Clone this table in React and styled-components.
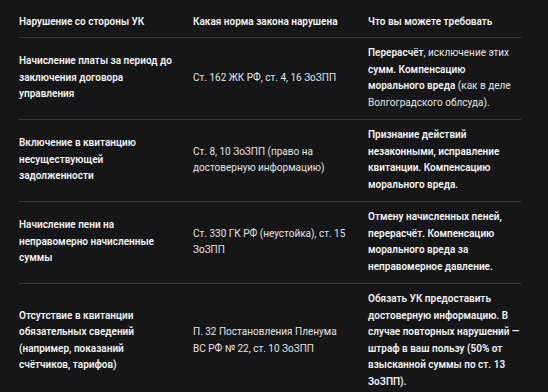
import React from 'react'
import styled, { createGlobalStyle } from 'styled-components'

const GlobalStyle = createGlobalStyle`
  html, body {
    margin: 0;
    padding: 0;
    background: #161618;
  }
  body {
    font-family: Roboto, "Noto Sans", sans-serif;
    color: #ececec;
  }
`

const Page = styled.div`
  padding: 0 19px;
  width: 548px;
  height: 392px;
  box-sizing: border-box;
  overflow: hidden;
`

const Table = styled.table`
  width: 502px;
  border-collapse: collapse;
  table-layout: fixed;
  font-size: 10px;
  line-height: 16.5px;
`

const HeadCell = styled.th`
  box-sizing: border-box;
  text-align: left;
  font-weight: 600;
  color: #f2f2f2;
  padding: 14px 20px 6px 0;
  border-bottom: 1px solid #3a3a3c;
  width: ${p => p.$w}px;
  &:last-child {
    padding-right: 0;
  }
`

const Row = styled.tr`
  border-bottom: 1px solid #3a3a3c;
  &:last-child {
    border-bottom: none;
  }
`

const Cell = styled.td`
  vertical-align: middle;
  padding: 7.5px 20px 7.5px 0;
  font-weight: ${p => (p.$bold ? 600 : 400)};
  color: ${p => (p.$bold ? '#f2f2f2' : '#e4e4e4')};
  &:last-child {
    padding-right: 0;
  }
`

const B = styled.b`
  font-weight: 600;
  color: #f2f2f2;
`

const rows = [
  {
    what: 'Начисление платы за период до заключения договора управления',
    law: 'Ст. 162 ЖК РФ, ст. 4, 16 ЗоЗПП',
    demand: (
      <>
        <B>Перерасчёт</B>, исключение этих <B>сумм. Компенсацию морального вреда</B> (как в деле Волгоградского облсуда).
      </>
    ),
    boldDemand: false,
  },
  {
    what: 'Включение в квитанцию несуществующей задолженности',
    law: 'Ст. 8, 10 ЗоЗПП (право на достоверную информацию)',
    demand: 'Признание действий незаконными, исправление квитанции. Компенсацию морального вреда.',
    boldDemand: true,
  },
  {
    what: 'Начисление пени на неправомерно начисленные суммы',
    law: 'Ст. 330 ГК РФ (неустойка), ст. 15 ЗоЗПП',
    demand: 'Отмену начисленных пеней, перерасчёт. Компенсацию морального вреда за неправомерное давление.',
    boldDemand: true,
  },
  {
    what: 'Отсутствие в квитанции обязательных сведений (например, показаний счётчиков, тарифов)',
    law: 'П. 32 Постановления Пленума ВС РФ № 22, ст. 10 ЗоЗПП',
    demand: 'Обязать УК предоставить достоверную информацию. В случае повторных нарушений — штраф в ваш пользу (50% от взысканной суммы по ст. 13 ЗоЗПП).',
    boldDemand: true,
  },
]

export default function App() {
  return (
    <>
      <GlobalStyle />
      <Page>
        <Table>
          <thead>
            <tr>
              <HeadCell $w={174}>Нарушение со стороны УК</HeadCell>
              <HeadCell $w={175}>Какая норма закона нарушена</HeadCell>
              <HeadCell $w={153}>Что вы можете требовать</HeadCell>
            </tr>
          </thead>
          <tbody>
            {rows.map((r, i) => (
              <Row key={i}>
                <Cell $bold>{r.what}</Cell>
                <Cell>{r.law}</Cell>
                <Cell $bold={r.boldDemand}>{r.demand}</Cell>
              </Row>
            ))}
          </tbody>
        </Table>
      </Page>
    </>
  )
}
